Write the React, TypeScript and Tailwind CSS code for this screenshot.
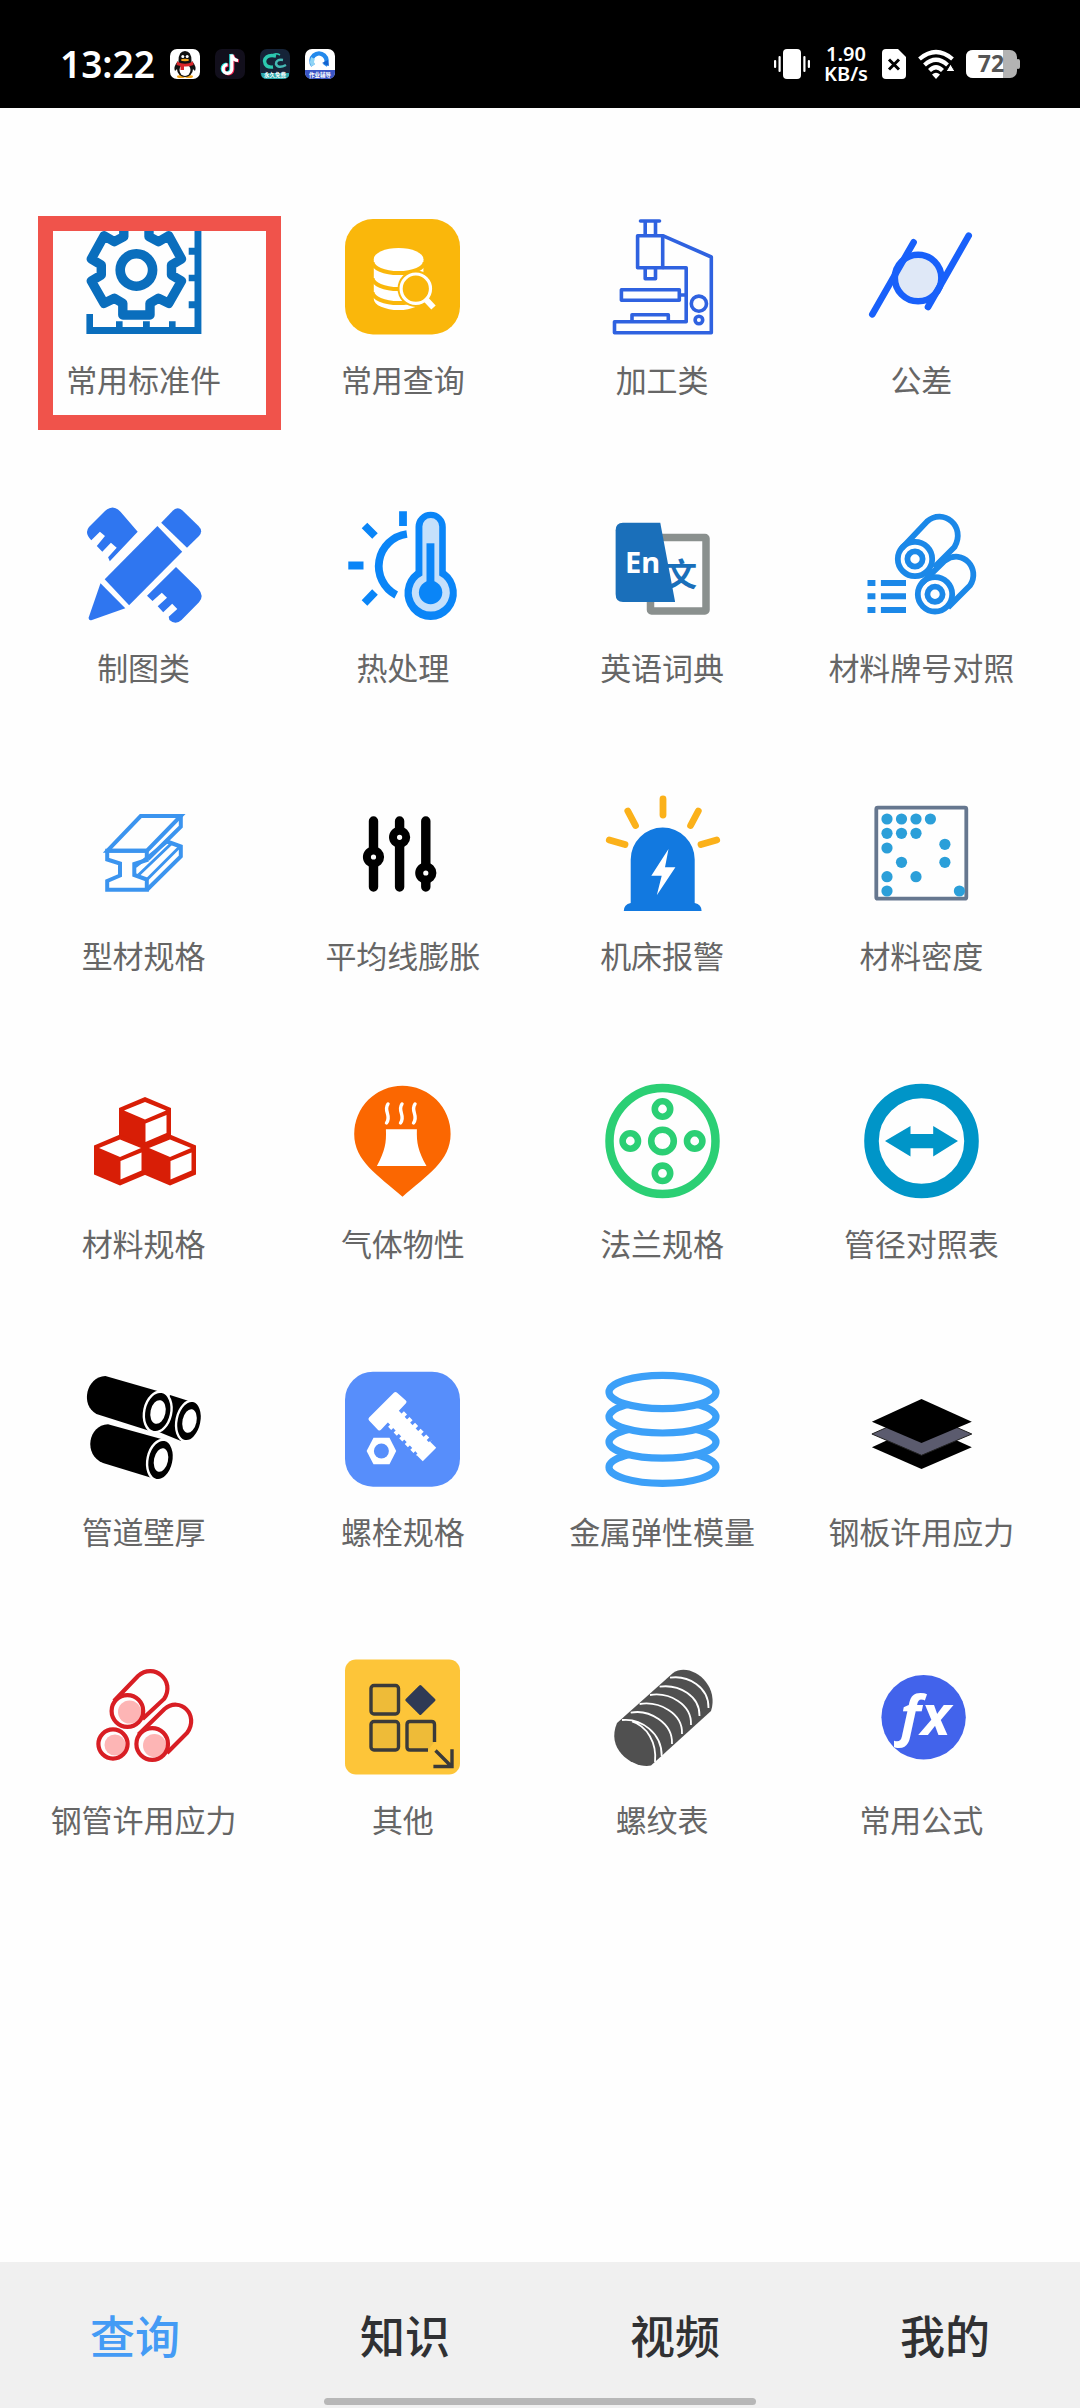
import { useState, type ReactNode } from 'react';

interface MenuItem {
  label: string;
  icon: ReactNode;
  marked?: boolean;
}

const icon = (children: ReactNode) => (
  <svg viewBox="0 0 115 115" className="size-[115px] overflow-visible" fill="none" aria-hidden="true">
    {children}
  </svg>
);

// 小立方体，x/y 为顶点坐标
function Cube({ x, y }: { x: number; y: number }) {
  return (
    <g transform={`translate(${x} ${y})`}>
      <path d="M0 0 26 11V40L0 51-26 40V11Z" fill="#d81e06" />
      <path d="M0 5 21 13.5 0 22.500-21 13.5Z" fill="#fff" />
      <path d="M.5 26.500 21.500 18V36L.5 45Z" fill="#fff" />
    </g>
  );
}

const densityDots = [
  [23, 24], [37.5, 24], [52, 24], [66.4, 24],
  [23, 38.3], [37.5, 38.3], [52, 38.3],
  [23, 53], [80.9, 49.3],
  [37.5, 67.3], [80.9, 67.3],
  [23, 81.7], [52, 81.7],
  [23, 96], [95.4, 96],
];

const menuItems: MenuItem[] = [
  {
    label: '常用标准件',
    marked: true,
    icon: icon(
      <>
        <path
          d="M36.8 96H64V84.3L72.4 79.3 82.7 84.3 95.5 62 85.5 56V46L95.5 40 82.7 16.7 72.4 22.7 63 17.7V5H37.8V17.7L28.4 22.7 18.1 16.7 5.3 40 15.3 46V56L5.3 62 18.1 84.3 28.4 79.3 36.8 84.3Z"
          stroke="#0a6ebd" strokeWidth="9.4" strokeLinejoin="round"
        />
        <circle cx="50.4" cy="51" r="16.2" stroke="#0a6ebd" strokeWidth="9.6" />
        <path
          d="M.4 95H7V108H30V102.3H36.6V108H57V102.3H63.8V108H83V102.3H89.6V108H108.5V89.3H102.7V82.3H108.5V62.3H102.7V55.7H108.5V35.7H102.7V28.7H108.5V0H115.4V115H.4Z"
          fill="#0a6ebd"
        />
      </>
    ),
  },
  {
    label: '常用查询',
    icon: icon(
      <>
        <rect width="115" height="115.5" rx="28" fill="#fab70b" />
        <path d="M28.8 40V80A24.8 11 0 0 0 78.4 80V40Z" fill="#fff" />
        <ellipse cx="53.6" cy="40" rx="24.8" ry="11" fill="#fff" />
        <g stroke="#fab70b" strokeWidth="4">
          <path d="M27.5 43A26 11 0 0 0 79.7 43" />
          <path d="M27.5 59A26 11 0 0 0 79.7 59" />
          <path d="M27.5 73A26 11 0 0 0 79.7 73" />
        </g>
        <circle cx="70.8" cy="69.7" r="18.3" fill="#fab70b" />
        <circle cx="70.8" cy="69.7" r="14.7" stroke="#fff" strokeWidth="3.2" />
        <path d="M80.5 80 88.5 88.5" stroke="#fff" strokeWidth="6" />
      </>
    ),
  },
  {
    label: '加工类',
    icon: icon(
      <g stroke="#2f62e0" strokeWidth="3.6" strokeLinejoin="round">
        <path d="M35.5 2H54.5" strokeLinecap="round" />
        <path d="M40.2 2V16.7M50.5 2V16.7" />
        <path d="M32.6 16.7H57.7V48.7H32.6Z" />
        <path d="M40.2 48.7V59.7H50.5V48.7" />
        <path d="M57.7 16.7 106.3 38V113.7H9.5V102.7H81.2V48.7H57.7" />
        <path d="M16.4 70.7H74.3V81.3H16.4ZM74.3 76H81.2" />
        <path d="M27 102.7V95.7H63.3V102.7" />
        <circle cx="93.9" cy="84.7" r="7.6" />
        <circle cx="93.9" cy="101" r="3.8" />
      </g>
    ),
  },
  {
    label: '公差',
    icon: icon(
      <g stroke="#1860fa" strokeWidth="6.6" strokeLinecap="round">
        <circle cx="54.1" cy="59" r="23.3" fill="#dfe8f7" />
        <path d="M8.3 95.3 49.6 23.3M104.7 16.7 64 88" />
      </g>
    ),
  },
  {
    label: '制图类',
    icon: icon(
      <g fill="#2f76f0">
        <path d="M71.4 19 96.2 44.7 43.1 98.3 18.7 72.3Z" />
        <path d="M75.2 15.7 87 3.5Q91.7-1 96.5 3.5L112.5 19Q117.5 24 113 29L101 40.7Z" />
        <path d="M14.5 76.3 39.3 101.3 6 113Q2.500 114 2.7 110.500Z" />
        <path d="M51.7 24.7 34.5 4.7Q27-3.500 19 4L3 20Q-2 26 5.3 33.3L13.9 24.7 19 29 10.8 39 16.3 44.7 24.9 35.7 30.7 40.7 22.1 50.3 23.8 54.3Z" />
        <path d="M90 60 112.5 82Q118.500 89 113 95.3L95.5 113Q89.6 118.500 83.4 113L82.7 109.7 91.3 102 86.2 96.7 77.2 105.3 71.7 99.3 81 90.7 75.8 85.7 66.5 94 61 88.7Z" />
      </g>
    ),
  },
  {
    label: '热处理',
    icon: icon(
      <>
        <path d="M70.5 20A15.15 15.15 0 0 1 100.8 20V64A26.2 27 0 1 1 70.5 64Z" fill="#0a85f7" />
        <path d="M77.4 19.5A8.4 8.4 0 0 1 94.2 19.5V68.5A19 19 0 1 1 77.4 68.5Z" fill="#c5e0fb" />
        <path d="M81.5 36.3H89.4V75H81.5Z" fill="#0a85f7" />
        <circle cx="85.6" cy="85.5" r="11.7" fill="#0a85f7" />
        <g stroke="#0a85f7" strokeWidth="7.8">
          <path d="M61.9 27A32.5 32.5 0 0 0 51.2 88" />
          <path d="M58 4.3V19M3.3 58.5H18.5M19.5 18.5 30 29M30 85 19.5 96" />
        </g>
      </>
    ),
  },
  {
    label: '英语词典',
    icon: icon(
      <>
        <rect x="45.5" y="30.5" width="55.5" height="73.5" rx="1" stroke="#8a908e" strokeWidth="7.5" />
        <text x="60" y="79" fontSize="32" fill="#1a6fba" className="font-['Noto_Sans_CJK_SC',sans-serif] font-bold">文</text>
        <path d="M18 15.7H55.3L70.1 95H18Q10.6 95 10.6 87V23.5Q10.6 15.7 18 15.7Z" fill="#1a6fba" />
        <text x="20" y="66" fontSize="29" fill="#fff" className="font-['Noto_Sans',sans-serif] font-bold">En</text>
      </>
    ),
  },
  {
    label: '材料牌号对照',
    icon: icon(
      <>
        <g stroke="#1b88e8" strokeWidth="5.8">
          <circle cx="51" cy="52" r="17.2" />
          <circle cx="51" cy="52" r="7.6" />
          <path d="M37.5 41.5 63 14.5C79 .5 102.5 19 90.5 40L70 60.5" />
          <circle cx="71" cy="87.3" r="17.2" />
          <circle cx="71" cy="87.3" r="7.6" />
          <path d="M57.5 76.5 81 53.5C99 41 117 62 106 78.5L84 100.5" />
        </g>
        <path
          d="M3.5 73H11.4V79H3.5ZM16.9 73H42V79H16.9ZM3.5 86.3H11.4V92.3H3.5ZM16.9 86.3H42V92.3H16.9ZM3.5 100H11.4V106H3.5ZM16.9 100H42V106H16.9Z"
          fill="#1b88e8"
        />
      </>
    ),
  },
  {
    label: '型材规格',
    icon: icon(
      <g stroke="#3b94ef" strokeWidth="4">
        <path d="M21.5 55.7 54.7 21H94.8L61 55.7Z" />
        <path d="M94.8 20V31.7L62 64" />
        <path d="M21.2 55.7H60.8V65L48.3 69V80L60.8 84.500V94.800H21.2V86L34 80.500V68.500L21.2 64.500Z" />
        <path d="M60.8 95 94.8 61.500V51.500L81 46.500" />
        <path d="M61 84.500 94 51.500M52.500 80 86 48M49.500 71.500 81 47" strokeWidth="3" />
      </g>
    ),
  },
  {
    label: '平均线膨胀',
    icon: icon(
      <>
        <path d="M28.5 26V92M54.6 26V92M80.8 26V92" stroke="#000" strokeWidth="9.4" strokeLinecap="round" />
        <g fill="#fff" stroke="#000" strokeWidth="8">
          <circle cx="28.5" cy="62" r="6.6" />
          <circle cx="54.6" cy="42.3" r="6.6" />
          <circle cx="80.8" cy="78" r="6.6" />
        </g>
      </>
    ),
  },
  {
    label: '机床报警',
    icon: icon(
      <>
        <path d="M25.7 108V64.5A32 32 0 0 1 89.7 64.5V108Q96.6 109.5 96.6 116H18.8Q18.8 109.5 25.7 108Z" fill="#1279e0" />
        <path d="M63.5 54 46.3 80.7H56.7L51.8 100.3 70.4 72.3H60Z" fill="#fff" />
        <path
          d="M58 4V20M22.8 16 30.5 30.5M93.3 16 85.6 30.5M4.3 45 20 49.5M111.7 45 96 49.5"
          stroke="#fbb11a" strokeWidth="6.8" strokeLinecap="round"
        />
      </>
    ),
  },
  {
    label: '材料密度',
    icon: icon(
      <>
        <rect x="12.300" y="12.700" width="90" height="91" rx="1.5" stroke="#66778f" strokeWidth="3.8" />
        {densityDots.map(([cx, cy]) => (
          <circle key={`${cx}-${cy}`} cx={cx} cy={cy} r="5.6" fill="#2b9fd9" />
        ))}
      </>
    ),
  },
  {
    label: '材料规格',
    icon: icon(
      <>
        <Cube x={59} y={14} />
        <Cube x={34} y={51.5} />
        <Cube x={84} y={51.5} />
      </>
    ),
  },
  {
    label: '气体物性',
    icon: icon(
      <>
        <path d="M9.2 50.9A48.2 48.2 0 0 1 105.6 50.9C105.6 78 82 92 57.5 113.7 33 92 9.2 78 9.2 50.9Z" fill="#fb6701" />
        <path d="M40.9 46.3H71.9C71.5 60 73 68 81.5 83H31.9C40 68 41.5 60 40.9 46.3Z" fill="#fff" />
        <path
          d="M43 21C38 28 47 33 41.5 40M57 21C52 28 61 33 55.5 40M70 21C65 28 74 33 68.5 40"
          stroke="#fff" strokeWidth="3.4" strokeLinecap="round"
        />
      </>
    ),
  },
  {
    label: '法兰规格',
    icon: icon(
      <g stroke="#2bcf74" strokeWidth="6.6">
        <circle cx="57.5" cy="58" r="53" strokeWidth="8.5" />
        <circle cx="57.5" cy="58" r="11.3" />
        <circle cx="57.5" cy="26" r="7.7" />
        <circle cx="57.5" cy="90.3" r="7.7" />
        <circle cx="25.3" cy="58" r="7.7" />
        <circle cx="89.7" cy="58" r="7.7" />
      </g>
    ),
  },
  {
    label: '管径对照表',
    icon: icon(
      <>
        <circle cx="57.5" cy="58" r="50" stroke="#0095c8" strokeWidth="14.6" />
        <path d="M21 58 46.5 43V51H69.2V43L94 58 69.2 73.5V65.3H46.5V73.5Z" fill="#0095c8" />
      </>
    ),
  },
  {
    label: '管道壁厚',
    icon: icon(
      <>
        <path d="M84 24 106 31 95 70 73 61Z" fill="#000" />
        <ellipse cx="103" cy="50" rx="12.500" ry="20.500" transform="rotate(12 103 50)" fill="#000" stroke="#fff" strokeWidth="2.400" />
        <ellipse cx="103.5" cy="50" rx="7" ry="12" transform="rotate(12 103.5 50)" fill="#fff" />
        <path d="M19.4 5 75 21 64 60 10.4 43C-6 34 0 6 19.4 5Z" fill="#000" />
        <ellipse cx="71.7" cy="41" rx="13.500" ry="20.500" transform="rotate(12 71.7 41)" fill="#000" stroke="#fff" strokeWidth="2.400" />
        <ellipse cx="72" cy="41" rx="7.500" ry="12" transform="rotate(12 72 41)" fill="#fff" />
        <path d="M22 53.3 79 69 66 107 17 92C-3 84 2 54 22 53.3Z" fill="#000" />
        <ellipse cx="74.5" cy="89" rx="13" ry="20.500" transform="rotate(12 74.5 89)" fill="#000" stroke="#fff" strokeWidth="2.400" />
        <ellipse cx="75" cy="89" rx="7" ry="12" transform="rotate(12 75 89)" fill="#fff" />
      </>
    ),
  },
  {
    label: '螺栓规格',
    icon: icon(
      <>
        <rect y=".7" width="115" height="115" rx="28" fill="#578efb" />
        <path d="M50.5 23 59.500 31 34.500 57.500 25.5 48Z" fill="#fff" stroke="#fff" strokeWidth="4" strokeLinejoin="round" />
        <path d="M44 41 84 83" stroke="#fff" strokeWidth="16" />
        <path d="M51 48 79 77" stroke="#fff" strokeWidth="22" strokeDasharray="4.5 3.5" />
        <path d="M78 77 84.5 83.500" stroke="#fff" strokeWidth="19" />
        <path d="M28.5 66.8H44.5L51.2 80 44.5 93.3H28.5L21.6 80Z" fill="#fff" />
        <circle cx="36.4" cy="80" r="7.5" fill="#578efb" />
      </>
    ),
  },
  {
    label: '金属弹性模量',
    icon: icon(
      <g stroke="#3ca0f8" strokeWidth="7.200" fill="#fefefe">
        <ellipse cx="57.5" cy="96.2" rx="53.500" ry="16.200" />
        <ellipse cx="57.5" cy="71" rx="53.500" ry="16.200" />
        <ellipse cx="57.5" cy="45.8" rx="53.500" ry="16.200" />
        <ellipse cx="57.5" cy="21" rx="53.500" ry="16.700" />
      </g>
    ),
  },
  {
    label: '钢板许用应力',
    icon: icon(
      <>
        <path d="M57.5 53.5 107.8 76.3 57.5 98 7.9 76.3Z" fill="#000" />
        <path d="M57.5 41 107.8 63 57.5 84.3 7.9 63Z" fill="#5b5b6e" stroke="#222" strokeWidth="1" />
        <path d="M57.5 28 107.8 50.7 57.5 72 7.9 50.7Z" fill="#000" />
      </>
    ),
  },
  {
    label: '钢管许用应力',
    icon: icon(
      <>
        <g fill="#fdb5b5">
          <circle cx="43.5" cy="53" r="11.5" />
          <circle cx="68.5" cy="86.500" r="11.5" />
          <circle cx="29" cy="86" r="10.5" />
        </g>
        <g stroke="#d81e24" strokeWidth="4.2">
          <circle cx="41.4" cy="52" r="15.8" />
          <circle cx="66.2" cy="85" r="15.8" />
          <circle cx="27" cy="85" r="14.6" />
          <path d="M28 42 52 17C68 3 90 22 78 40L56.5 60" />
          <path d="M52.5 75.5 78.5 50C94 37 114 56 101 74L81 94" />
        </g>
      </>
    ),
  },
  {
    label: '其他',
    icon: icon(
      <>
        <rect y=".5" width="115" height="115" rx="11" fill="#fdc539" />
        <g stroke="#3a3a3a" strokeWidth="3.4" fill="#eebb38">
          <rect x="26" y="26.500" width="27.500" height="28.500" rx="3" />
          <rect x="26" y="62.500" width="27.500" height="28.500" rx="3" />
          <path d="M89.5 83V65.5Q89.5 62.5 86.5 62.5H65Q62 62.5 62 65.5V88Q62 91 65 91H83" />
        </g>
        <path d="M75.3 27.5 89 41 75.3 54.5 61.8 41Z" fill="#2f3a55" stroke="#2f3a55" strokeWidth="3" strokeLinejoin="round" />
        <path d="M90.5 91.5 106 107M107 90.3V107.5H88.4" stroke="#3a3a3a" strokeWidth="3.4" />
      </>
    ),
  },
  {
    label: '螺纹表',
    icon: icon(
      <>
        <path d="M12 64 68 14C84 2 115 24 106 52L46 106.5C30 110 0 92 12 64Z" fill="#505050" />
        <path
          d="M17 61C36 59 57 74 56.7 97M27 62.5C42 67 52 84 50 103M25.7 53.7C44 50 68 64 67 85M34.6 45C54 42 78 54 77 75M45 36C64 33 87 45 86 66M54.6 27.7C74 25 95 37 94.5 57M65 18.7C83 16 104 28 103.5 49"
          stroke="#fff" strokeWidth="1.8"
        />
      </>
    ),
  },
  {
    label: '常用公式',
    icon: icon(
      <>
        <circle cx="59.6" cy="58.3" r="42.2" fill="#4263eb" />
        <text x="36" y="76" fontSize="56" fill="#fff" className="font-['Open_Sans','Noto_Sans',sans-serif] font-bold italic">fx</text>
      </>
    ),
  },
];

const tabs = ['查询', '知识', '视频', '我的'];

function StatusBar() {
  return (
    <header className="flex h-27 items-center justify-between bg-black px-[60px] pt-5 font-['Noto_Sans',sans-serif] text-white">
      <div className="flex items-center gap-[15px]">
        <span className="text-[37px] leading-10 font-semibold">13:22</span>
        {/* QQ */}
        <svg viewBox="0 0 30 30" className="size-[30px]" aria-hidden="true">
          <rect width="30" height="30" rx="7" fill="#fff" />
          <path d="M8 12Q3 18 5 22L8 19ZM22 12Q27 18 25 22L22 19Z" fill="#111" />
          <ellipse cx="11" cy="27.5" rx="4" ry="1.5" fill="#f4a51c" />
          <ellipse cx="19" cy="27.5" rx="4" ry="1.5" fill="#f4a51c" />
          <ellipse cx="15" cy="20" rx="8" ry="8" fill="#111" />
          <ellipse cx="15" cy="21" rx="5.5" ry="6" fill="#fff" />
          <path d="M8.5 12Q8.5 2 15 2T21.5 12V14H8.5Z" fill="#111" />
          <circle cx="12.8" cy="7.5" r="1.5" fill="#fff" />
          <circle cx="17.2" cy="7.5" r="1.5" fill="#fff" />
          <ellipse cx="15" cy="11" rx="4" ry="1.2" fill="#f4a51c" />
          <path d="M7 12.5Q15 17 23 12.5L23.5 16Q18 18 14 17.5V21H10.5V17L6.5 16Z" fill="#d9252a" />
        </svg>
        {/* 抖音 */}
        <svg viewBox="0 0 30 30" className="size-[30px]" fill="none" strokeWidth="3.2" aria-hidden="true">
          <rect width="30" height="30" rx="7" fill="#120f1c" />
          <path d="M15.8 5V19.5A4.3 4.3 0 1 1 11.5 15.2M15.8 5Q16.5 10.5 22 11" stroke="#25e0dc" />
          <path d="M17.8 6V20.5A4.3 4.3 0 1 1 13.5 16.2M17.8 6Q18.5 11.5 24 12" stroke="#f5204f" />
          <path d="M16.8 5.5V20A4.3 4.3 0 1 1 12.5 15.7M16.8 5.5Q17.5 11 23 11.5" stroke="#fff" />
        </svg>
        <svg viewBox="0 0 30 30" className="size-[30px]" fill="none" aria-hidden="true">
          <rect width="30" height="30" rx="7" fill="#152338" />
          <path d="M16 7Q6 5 4.5 12Q5 19 13 18" stroke="#2cc9b0" strokeWidth="3.5" />
          <path d="M23 11Q16 10 16 15Q18 20 26 16" stroke="#45b9b5" strokeWidth="2.5" />
          <path d="M11 7Q15 3 20 6" stroke="#2cc9b0" strokeWidth="1.5" />
          <path d="M1 24H29V27Q27 30 23 30H7Q1 30 1 24Z" fill="#2ca9ad" />
          <text x="4" y="28" fontSize="5.5" fill="#fff" className="font-['Noto_Sans_CJK_SC',sans-serif] font-bold">永久免费</text>
        </svg>
        <svg viewBox="0 0 30 30" className="size-[30px]" fill="none" aria-hidden="true">
          <rect width="30" height="30" rx="7" fill="#fff" />
          <path d="M8 16.5A7.5 7.5 0 1 1 20 16.5" stroke="#2389ec" strokeWidth="4.5" />
          <path d="M8 16.5Q6 13 8 9" stroke="#8fd4f5" strokeWidth="4" />
          <path d="M17 14 24 17 23 11Z" fill="#1262cf" />
          <path d="M0 21H30V23Q30 30 23 30H7Q0 30 0 23Z" fill="#3a55c4" />
          <text x="4" y="28" fontSize="5.5" fill="#fff" className="font-['Noto_Sans_CJK_SC',sans-serif] font-bold">作业辅导</text>
        </svg>
      </div>

      <div className="flex items-center gap-3">
        {/* 振动 */}
        <svg viewBox="0 0 36 30" className="h-[30px] w-9" fill="#fff" aria-hidden="true">
          <rect x="9" width="18" height="30" rx="4" />
          <rect x="4.5" y="7" width="2.2" height="16" rx="1" />
          <rect y="11" width="2.2" height="8" rx="1" />
          <rect x="29.3" y="7" width="2.2" height="16" rx="1" />
          <rect x="33.8" y="11" width="2.2" height="8" rx="1" />
        </svg>
        {/* 网速 */}
        <p className="w-12 text-center text-[20px] leading-5 font-semibold">
          1.90
          <br />
          KB/s
        </p>
        <svg viewBox="0 0 24 30" className="h-[30px] w-6" aria-hidden="true">
          <path d="M4 0H16L24 8V26Q24 30 20 30H4Q0 30 0 26V4Q0 0 4 0Z" fill="#fff" />
          <path d="M7 10.5 17 20.5M17 10.5 7 20.5" stroke="#000" strokeWidth="3" />
        </svg>
        <svg viewBox="0 0 36 30" className="h-[30px] w-9" fill="none" stroke="#fff" strokeWidth="4.2" aria-hidden="true">
          <path d="M1.5 10Q18-4 34.5 10" />
          <path d="M6.5 16Q18 5.500 29.5 16" />
          <path d="M11.5 21.500Q18 15 24.5 21.500" />
          <path d="M14 25.5Q18 22 22 25.5L18 30Z" fill="#fff" stroke="none" />
          <path d="M32.5 15 37 22.500H28Z" fill="#fff" stroke="#000" strokeWidth="1" />
        </svg>
        {/* 电量 */}
        <svg viewBox="0 0 54 28" className="h-7 w-[54px] overflow-visible" aria-hidden="true">
          <rect width="51" height="28" rx="7" fill="#b3b3b3" />
          <rect x="50" y="9" width="4" height="10" rx="2" fill="#b3b3b3" />
          <path d="M7 0H37V28H7Q0 28 0 21V7Q0 0 7 0Z" fill="#fff" />
          <text x="25" y="22" fontSize="23" textAnchor="middle" fill="#555" className="font-bold">72</text>
        </svg>
      </div>
    </header>
  );
}

export default function App() {
  const [activeTab, setActiveTab] = useState('查询');

  return (
    <div className="flex min-h-screen flex-col bg-[#fefefe] font-['Noto_Sans_CJK_SC',sans-serif]">
      <StatusBar />

      {/* 功能菜单 */}
      <main className="grid flex-1 grid-cols-4 content-start gap-y-27 pt-[111px] pr-[29px] pb-20 pl-[14px]">
        {menuItems.map((item) => (
          <button key={item.label} type="button" className="relative flex flex-col items-center gap-[25px]">
            {item.icon}
            <span className="text-[31px] leading-10 whitespace-nowrap text-[#666]">{item.label}</span>
            {item.marked && (
              <span className="absolute -top-[3px] left-6 h-[214px] w-[243px] border-15 border-[#f0534b]" />
            )}
          </button>
        ))}
      </main>

      {/* 底部导航 */}
      <nav className="relative grid h-[146px] grid-cols-4 bg-[#f0f0f0]">
        {tabs.map((tab) => (
          <button
            key={tab}
            type="button"
            onClick={() => setActiveTab(tab)}
            className={`text-[45px] font-medium ${activeTab === tab ? 'text-[#449bf5]' : 'text-[#303133]'}`}
          >
            {tab}
          </button>
        ))}
        <span className="absolute bottom-[3px] left-1/2 h-[7px] w-2/5 -translate-x-1/2 rounded-full bg-[#b7b7b7]" />
      </nav>
    </div>
  );
}
